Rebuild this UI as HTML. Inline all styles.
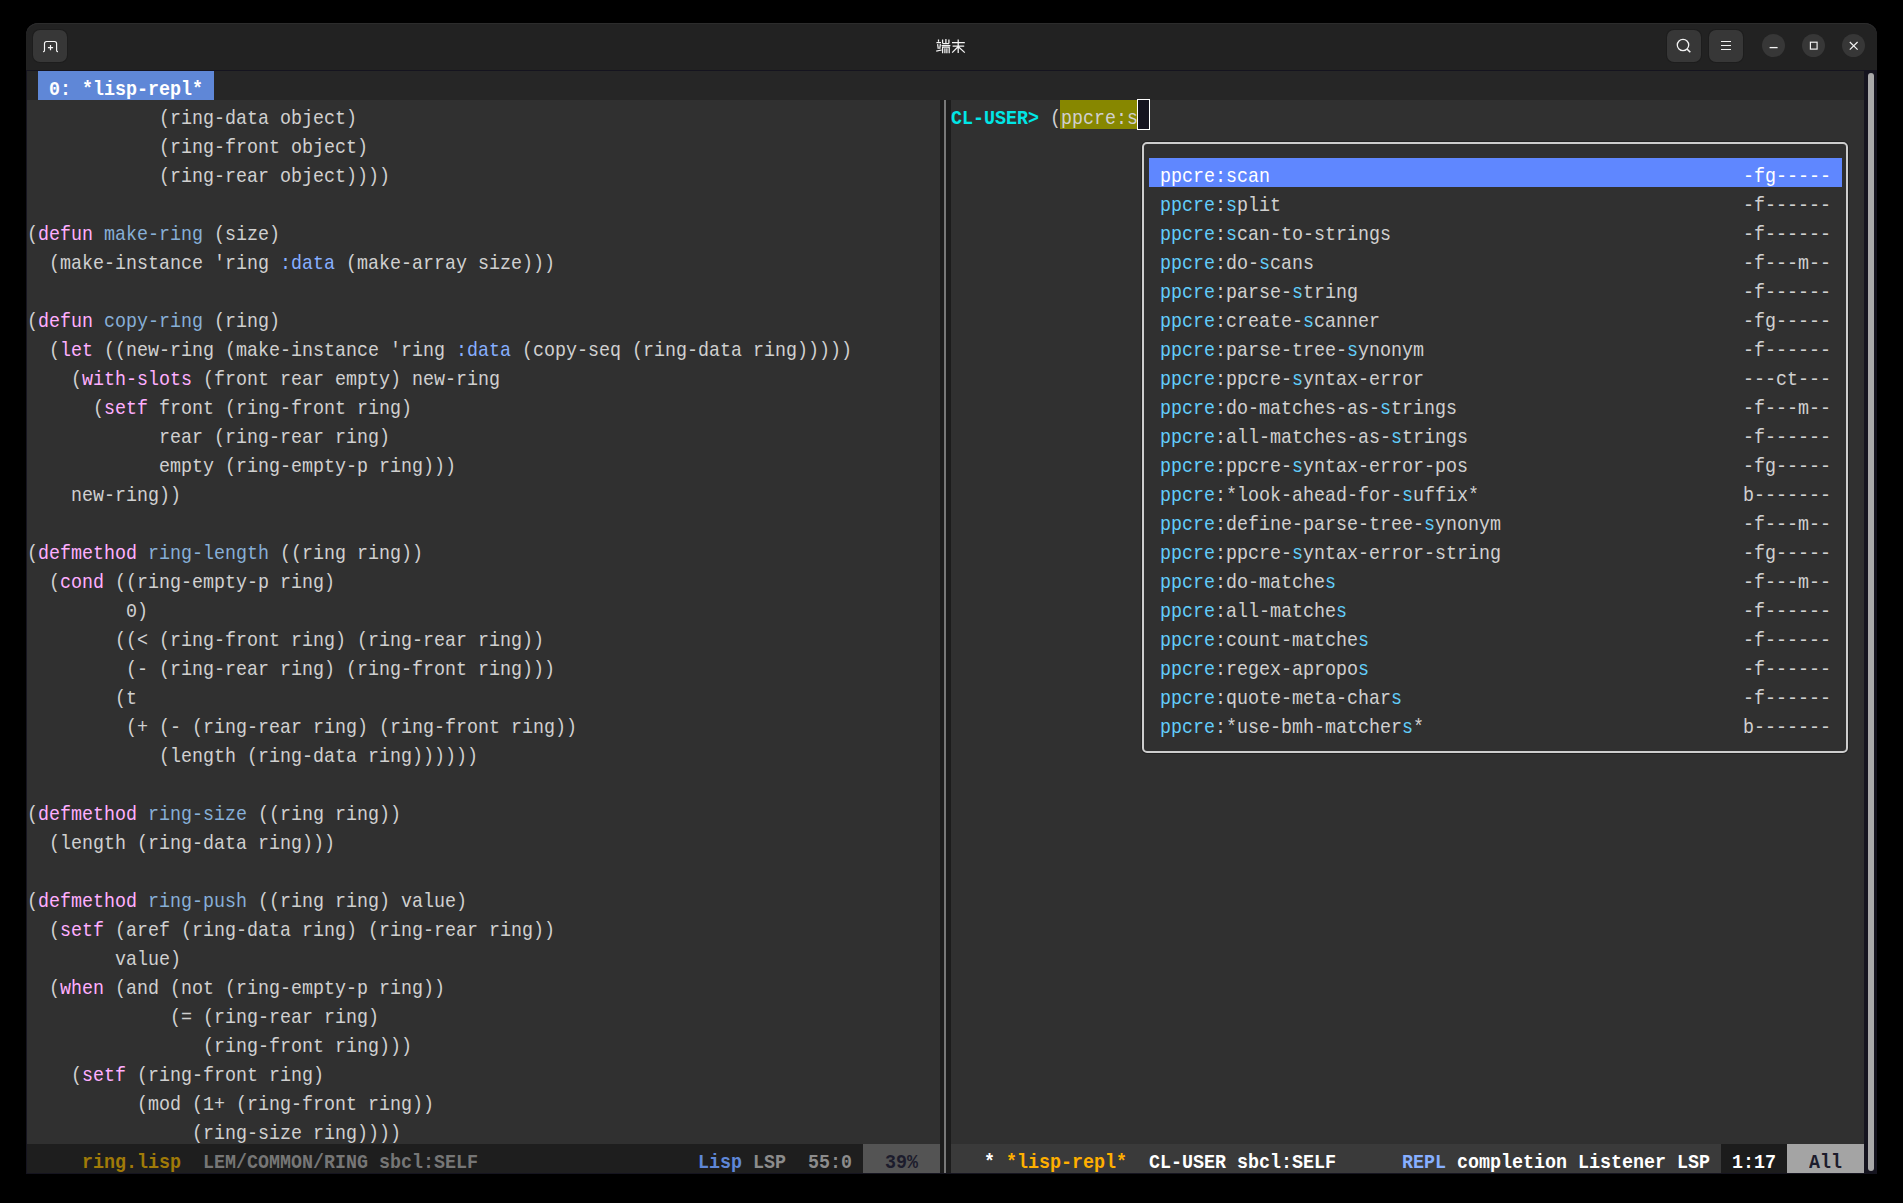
<!DOCTYPE html>
<html><head><meta charset="utf-8"><title>lem</title><style>
html,body{margin:0;padding:0;background:#000;width:1903px;height:1203px;overflow:hidden;position:relative}
.a{position:absolute}
.t{position:absolute;white-space:pre;font-family:"Liberation Mono",monospace;font-size:21px;line-height:29px;height:29px;transform:scaleX(0.87287);transform-origin:0 0;color:#d0d0d0}
.b{font-weight:bold}
#win{position:absolute;left:26px;top:23px;width:1851px;height:1151px;background:#15141f;border-radius:12px 12px 0 0;overflow:hidden}
#hb{position:absolute;left:26px;top:23px;width:1851px;height:47px;background:#222222;border-radius:12px 12px 0 0;box-shadow:inset 0 1px #2c2c2c}
.btn{position:absolute;background:#373737;border-radius:7px;box-shadow:0 0 0 1px #1d1d1d}
.cb{position:absolute;background:#373737;border-radius:50%;width:23px;height:23px}
</style></head><body>

<div id="win"></div>
<div id="hb"></div>
<div class="btn" style="left:33px;top:30px;width:34px;height:32px"></div>
<svg class="a" style="left:33px;top:30px" width="34" height="32" viewBox="0 0 34 32">
 <path d="M10.1 21.6 h0.4 q1 0 1 -1 V13.6 q0 -2.1 2.1 -2.1 h7.9 q2.1 0 2.1 2.1 V20.6 q0 1 1 1 h0.4" fill="none" stroke="#f6f6f6" stroke-width="1.15"/>
 <path d="M17.5 15 v5.2 M14.9 17.6 h5.2" stroke="#f6f6f6" stroke-width="1.2"/>
</svg>
<svg class="a" style="left:934px;top:36px" width="34" height="20" viewBox="0 0 34 20">
 <g stroke="#f4f4f4" stroke-width="1.25" fill="none">
  <path d="M4.5 3.6 v2.2 M2.4 6.6 h4.6 M3.6 8.2 l0.7 4.6 M6.4 8.2 l-0.7 4.6 M2.2 15.2 L7.6 14"/>
  <path d="M8.6 3.4 v4.2 M11.9 3 v4.6 M14.9 3.4 v4.2 M8.6 7.6 h6.3 M7.6 9.5 h8.8"/>
  <path d="M8.6 17.2 V11 h6.6 V17.2 M10.9 12.2 v5 M12.9 12.2 v5"/>
  <path d="M18 6.6 h12.8 M18.6 10.2 h11.6 M24.2 3.4 v13.6 M24 10.8 L18.2 16.6 M24.4 10.8 L30.8 16.6"/>
 </g>
</svg>
<div class="btn" style="left:1667px;top:30px;width:34px;height:32px"></div>
<svg class="a" style="left:1667px;top:30px" width="34" height="32" viewBox="0 0 34 32">
 <circle cx="16" cy="15" r="5.7" fill="none" stroke="#f2f2f2" stroke-width="1.3"/>
 <path d="M20 19 L23.3 22.3" stroke="#f2f2f2" stroke-width="1.6"/>
</svg>
<div class="btn" style="left:1709px;top:30px;width:34px;height:32px"></div>
<svg class="a" style="left:1709px;top:30px" width="34" height="32" viewBox="0 0 34 32">
 <path d="M12 11.5 h10 M12 15.5 h10 M12 19.5 h10" stroke="#f2f2f2" stroke-width="1.2"/>
</svg>
<div class="cb" style="left:1762.2px;top:34.3px"></div>
<div class="cb" style="left:1802.2px;top:34.3px"></div>
<div class="cb" style="left:1842.2px;top:34.3px"></div>
<svg class="a" style="left:1762.2px;top:34.3px" width="23" height="23" viewBox="0 0 23 23">
 <path d="M7.6 13.6 h8" stroke="#f4f4f4" stroke-width="1.3"/>
</svg>
<svg class="a" style="left:1802.2px;top:34.3px" width="23" height="23" viewBox="0 0 23 23">
 <rect x="8.4" y="8.2" width="6.7" height="6.9" fill="none" stroke="#f4f4f4" stroke-width="1.15"/>
</svg>
<svg class="a" style="left:1842.2px;top:34.3px" width="23" height="23" viewBox="0 0 23 23">
 <path d="M7.8 8 L15.6 15.6 M15.6 8 L7.8 15.6" stroke="#f4f4f4" stroke-width="1.2"/>
</svg>

<div class="a" style="left:27px;top:71px;width:1837px;height:29px;background:#262626;"></div><div class="a" style="left:38px;top:71px;width:176px;height:29px;background:#5f87d7;"></div><div class="a" style="left:27px;top:100px;width:913px;height:1044px;background:#303030;"></div><div class="a" style="left:951px;top:100px;width:913px;height:1044px;background:#303030;"></div><div class="a" style="left:940px;top:100px;width:11px;height:1073px;background:#1c1c1c;"></div><div class="a" style="left:944px;top:100px;width:2px;height:1073px;background:#777777;"></div><div class="a" style="left:27px;top:1144px;width:913px;height:29px;background:#1e1e1e;"></div><div class="a" style="left:863px;top:1144px;width:77px;height:29px;background:#545454;"></div><div class="a" style="left:951px;top:1144px;width:913px;height:29px;background:#3a3a3a;"></div><div class="a" style="left:1721px;top:1144px;width:66px;height:29px;background:#1c1c1c;"></div><div class="a" style="left:1787px;top:1144px;width:77px;height:29px;background:#a4a4a4;"></div><div class="a" style="left:1868px;top:73px;width:6px;height:1098px;background:#a9a9a9;border-radius:3px"></div><div class="a" style="left:1060px;top:100px;width:77px;height:29px;background:#878700;"></div><div class="a" style="left:1137px;top:99px;width:13px;height:31px;background:#15141f;box-sizing:border-box;border:1.3px solid #fff"></div><div class="a" style="left:1142px;top:142px;width:706px;height:611px;background:#303030;box-sizing:border-box;border:2px solid #cdcdcd;border-radius:5px;box-shadow:0 0 0 1px #222"></div><div class="a" style="left:1149px;top:158px;width:693px;height:29px;background:#5f87ff;"></div><div class="t b" style="left:38px;top:75px;color:#ffffff"> 0: *lisp-repl* </div><div class="t" style="left:27px;top:104px;color:#d0d0d0">            (ring-data object)</div><div class="t" style="left:27px;top:133px;color:#d0d0d0">            (ring-front object)</div><div class="t" style="left:27px;top:162px;color:#d0d0d0">            (ring-rear object))))</div><div class="t" style="left:27px;top:220px;color:#d0d0d0">(<span style="color:#ffafff">defun</span> <span style="color:#87afd7">make-ring</span> (size)</div><div class="t" style="left:27px;top:249px;color:#d0d0d0">  (make-instance &#x27;ring <span style="color:#87afff">:data</span> (make-array size)))</div><div class="t" style="left:27px;top:307px;color:#d0d0d0">(<span style="color:#ffafff">defun</span> <span style="color:#87afd7">copy-ring</span> (ring)</div><div class="t" style="left:27px;top:336px;color:#d0d0d0">  (<span style="color:#ffafff">let</span> ((new-ring (make-instance &#x27;ring <span style="color:#87afff">:data</span> (copy-seq (ring-data ring)))))</div><div class="t" style="left:27px;top:365px;color:#d0d0d0">    (<span style="color:#ffafff">with-slots</span> (front rear empty) new-ring</div><div class="t" style="left:27px;top:394px;color:#d0d0d0">      (<span style="color:#ffafff">setf</span> front (ring-front ring)</div><div class="t" style="left:27px;top:423px;color:#d0d0d0">            rear (ring-rear ring)</div><div class="t" style="left:27px;top:452px;color:#d0d0d0">            empty (ring-empty-p ring)))</div><div class="t" style="left:27px;top:481px;color:#d0d0d0">    new-ring))</div><div class="t" style="left:27px;top:539px;color:#d0d0d0">(<span style="color:#ffafff">defmethod</span> <span style="color:#87afd7">ring-length</span> ((ring ring))</div><div class="t" style="left:27px;top:568px;color:#d0d0d0">  (<span style="color:#ffafff">cond</span> ((ring-empty-p ring)</div><div class="t" style="left:27px;top:597px;color:#d0d0d0">         0)</div><div class="t" style="left:27px;top:626px;color:#d0d0d0">        ((&lt; (ring-front ring) (ring-rear ring))</div><div class="t" style="left:27px;top:655px;color:#d0d0d0">         (- (ring-rear ring) (ring-front ring)))</div><div class="t" style="left:27px;top:684px;color:#d0d0d0">        (t</div><div class="t" style="left:27px;top:713px;color:#d0d0d0">         (+ (- (ring-rear ring) (ring-front ring))</div><div class="t" style="left:27px;top:742px;color:#d0d0d0">            (length (ring-data ring))))))</div><div class="t" style="left:27px;top:800px;color:#d0d0d0">(<span style="color:#ffafff">defmethod</span> <span style="color:#87afd7">ring-size</span> ((ring ring))</div><div class="t" style="left:27px;top:829px;color:#d0d0d0">  (length (ring-data ring)))</div><div class="t" style="left:27px;top:887px;color:#d0d0d0">(<span style="color:#ffafff">defmethod</span> <span style="color:#87afd7">ring-push</span> ((ring ring) value)</div><div class="t" style="left:27px;top:916px;color:#d0d0d0">  (<span style="color:#ffafff">setf</span> (aref (ring-data ring) (ring-rear ring))</div><div class="t" style="left:27px;top:945px;color:#d0d0d0">        value)</div><div class="t" style="left:27px;top:974px;color:#d0d0d0">  (<span style="color:#ffafff">when</span> (and (not (ring-empty-p ring))</div><div class="t" style="left:27px;top:1003px;color:#d0d0d0">             (= (ring-rear ring)</div><div class="t" style="left:27px;top:1032px;color:#d0d0d0">                (ring-front ring)))</div><div class="t" style="left:27px;top:1061px;color:#d0d0d0">    (<span style="color:#ffafff">setf</span> (ring-front ring)</div><div class="t" style="left:27px;top:1090px;color:#d0d0d0">          (mod (1+ (ring-front ring))</div><div class="t" style="left:27px;top:1119px;color:#d0d0d0">               (ring-size ring))))</div><div class="t b" style="left:951px;top:104px"><span style="color:#00e6e6">CL-USER&gt;</span></div><div class="t" style="left:1039px;top:104px;color:#d0d0d0"> (</div><div class="t" style="left:1061px;top:104px;color:#d0d0d0">ppcre:s</div><div class="t" style="left:1160px;top:162px;color:#ffffff">ppcre:scan</div><div class="t" style="left:1743px;top:162px;color:#ffffff">-fg-----</div><div class="t" style="left:1160px;top:191px;color:#d0d0d0"><span style="color:#62cdfa">ppcre</span>:<span style="color:#62cdfa">s</span>plit</div><div class="t" style="left:1743px;top:191px;color:#d0d0d0">-f------</div><div class="t" style="left:1160px;top:220px;color:#d0d0d0"><span style="color:#62cdfa">ppcre</span>:<span style="color:#62cdfa">s</span>can-to-strings</div><div class="t" style="left:1743px;top:220px;color:#d0d0d0">-f------</div><div class="t" style="left:1160px;top:249px;color:#d0d0d0"><span style="color:#62cdfa">ppcre</span>:do-<span style="color:#62cdfa">s</span>cans</div><div class="t" style="left:1743px;top:249px;color:#d0d0d0">-f---m--</div><div class="t" style="left:1160px;top:278px;color:#d0d0d0"><span style="color:#62cdfa">ppcre</span>:parse-<span style="color:#62cdfa">s</span>tring</div><div class="t" style="left:1743px;top:278px;color:#d0d0d0">-f------</div><div class="t" style="left:1160px;top:307px;color:#d0d0d0"><span style="color:#62cdfa">ppcre</span>:create-<span style="color:#62cdfa">s</span>canner</div><div class="t" style="left:1743px;top:307px;color:#d0d0d0">-fg-----</div><div class="t" style="left:1160px;top:336px;color:#d0d0d0"><span style="color:#62cdfa">ppcre</span>:parse-tree-<span style="color:#62cdfa">s</span>ynonym</div><div class="t" style="left:1743px;top:336px;color:#d0d0d0">-f------</div><div class="t" style="left:1160px;top:365px;color:#d0d0d0"><span style="color:#62cdfa">ppcre</span>:ppcre-<span style="color:#62cdfa">s</span>yntax-error</div><div class="t" style="left:1743px;top:365px;color:#d0d0d0">---ct---</div><div class="t" style="left:1160px;top:394px;color:#d0d0d0"><span style="color:#62cdfa">ppcre</span>:do-matches-as-<span style="color:#62cdfa">s</span>trings</div><div class="t" style="left:1743px;top:394px;color:#d0d0d0">-f---m--</div><div class="t" style="left:1160px;top:423px;color:#d0d0d0"><span style="color:#62cdfa">ppcre</span>:all-matches-as-<span style="color:#62cdfa">s</span>trings</div><div class="t" style="left:1743px;top:423px;color:#d0d0d0">-f------</div><div class="t" style="left:1160px;top:452px;color:#d0d0d0"><span style="color:#62cdfa">ppcre</span>:ppcre-<span style="color:#62cdfa">s</span>yntax-error-pos</div><div class="t" style="left:1743px;top:452px;color:#d0d0d0">-fg-----</div><div class="t" style="left:1160px;top:481px;color:#d0d0d0"><span style="color:#62cdfa">ppcre</span>:*look-ahead-for-<span style="color:#62cdfa">s</span>uffix*</div><div class="t" style="left:1743px;top:481px;color:#d0d0d0">b-------</div><div class="t" style="left:1160px;top:510px;color:#d0d0d0"><span style="color:#62cdfa">ppcre</span>:define-parse-tree-<span style="color:#62cdfa">s</span>ynonym</div><div class="t" style="left:1743px;top:510px;color:#d0d0d0">-f---m--</div><div class="t" style="left:1160px;top:539px;color:#d0d0d0"><span style="color:#62cdfa">ppcre</span>:ppcre-<span style="color:#62cdfa">s</span>yntax-error-string</div><div class="t" style="left:1743px;top:539px;color:#d0d0d0">-fg-----</div><div class="t" style="left:1160px;top:568px;color:#d0d0d0"><span style="color:#62cdfa">ppcre</span>:do-matche<span style="color:#62cdfa">s</span></div><div class="t" style="left:1743px;top:568px;color:#d0d0d0">-f---m--</div><div class="t" style="left:1160px;top:597px;color:#d0d0d0"><span style="color:#62cdfa">ppcre</span>:all-matche<span style="color:#62cdfa">s</span></div><div class="t" style="left:1743px;top:597px;color:#d0d0d0">-f------</div><div class="t" style="left:1160px;top:626px;color:#d0d0d0"><span style="color:#62cdfa">ppcre</span>:count-matche<span style="color:#62cdfa">s</span></div><div class="t" style="left:1743px;top:626px;color:#d0d0d0">-f------</div><div class="t" style="left:1160px;top:655px;color:#d0d0d0"><span style="color:#62cdfa">ppcre</span>:regex-apropo<span style="color:#62cdfa">s</span></div><div class="t" style="left:1743px;top:655px;color:#d0d0d0">-f------</div><div class="t" style="left:1160px;top:684px;color:#d0d0d0"><span style="color:#62cdfa">ppcre</span>:quote-meta-char<span style="color:#62cdfa">s</span></div><div class="t" style="left:1743px;top:684px;color:#d0d0d0">-f------</div><div class="t" style="left:1160px;top:713px;color:#d0d0d0"><span style="color:#62cdfa">ppcre</span>:*use-bmh-matcher<span style="color:#62cdfa">s</span>*</div><div class="t" style="left:1743px;top:713px;color:#d0d0d0">b-------</div><div class="t b" style="left:82px;top:1148px"><span style="color:#a07a08">ring.lisp</span>  <span style="color:#767676">LEM/COMMON/RING sbcl:SELF</span></div><div class="t b" style="left:698px;top:1148px"><span style="color:#5f87d7">Lisp</span> <span style="color:#8c8c8c">LSP</span>  <span style="color:#8c8c8c">55:0</span></div><div class="t b" style="left:885px;top:1148px;color:#1c1c2c">39%</div><div class="t b" style="left:984px;top:1148px"><span style="color:#ffffff">*</span> <span style="color:#ffaf00">*lisp-repl*</span>  <span style="color:#ffffff">CL-USER sbcl:SELF</span></div><div class="t b" style="left:1402px;top:1148px"><span style="color:#87afff">REPL</span> <span style="color:#ffffff">completion Listener LSP</span></div><div class="t b" style="left:1732px;top:1148px;color:#ffffff">1:17</div><div class="t b" style="left:1809px;top:1148px;color:#1c1c2c">All</div>
</body></html>
